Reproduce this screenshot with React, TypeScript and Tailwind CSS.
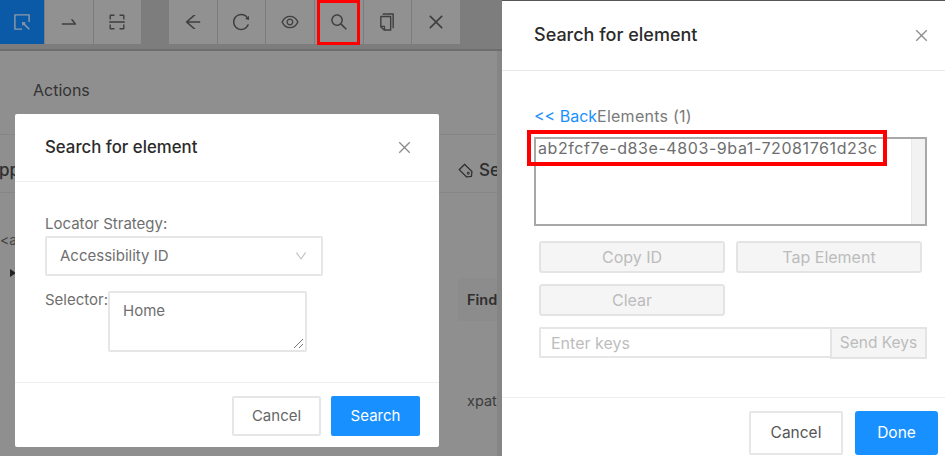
import React from 'react';
import {
  AiOutlineArrowLeft,
  AiOutlineClose,
  AiOutlineCopy,
  AiOutlineDown,
  AiOutlineEye,
  AiOutlineReload,
  AiOutlineScan,
  AiOutlineSearch,
  AiOutlineSelect,
  AiOutlineSwapRight,
  AiOutlineTag,
} from 'react-icons/ai';

const font = "font-['Inter','Liberation_Sans',sans-serif]";

const ToolButton: React.FC<{ children: React.ReactNode; active?: boolean; outlined?: boolean }> = ({ children, active, outlined }) => (
  <div
    className={`relative flex h-[44px] items-center justify-center text-[20px] ${
      active ? 'w-[44px] bg-[#0a5aa8] text-[#8f9aa6]' : 'w-[47.67px] bg-[#919191] text-[#3f3f3f]'
    }`}
  >
    {children}
    {outlined && <div className="absolute left-[2px] top-0 h-[45px] w-[43px] border-[3px] border-[#fe0000]" />}
  </div>
);

const DisabledButton: React.FC<{ label: string }> = ({ label }) => (
  <button className="h-[32px] w-[186px] rounded-[3px] border-2 border-[#e4e4e4] bg-[#f5f5f5] text-[16px] text-[#bcbcbc]">{label}</button>
);

const SearchModal = () => (
  <div className="absolute left-[15px] top-[114px] flex h-[333px] w-[424px] flex-col rounded-[2px] bg-white">
    <div className="flex h-[68px] items-center justify-between border-b border-[#eeeeee] pl-[30px] pr-[26px]">
      <span className="pt-[1px] text-[16.8px] font-medium text-[#2b2b2b]">Search for element</span>
      <AiOutlineClose className="text-[17px] text-[#8c8c8c]" />
    </div>
    <div className="flex-1 pl-[30px] pt-[33px]">
      <div className="text-[15px] leading-[18px] text-[#6f6f6f]">Locator Strategy:</div>
      <div className="mt-[3px] flex h-[40px] w-[278px] items-center justify-between rounded-[2px] border-2 border-[#e6e6e6] pl-[13px] pr-[13px] text-[15px] text-[#6f6f6f]">
        Accessibility ID
        <AiOutlineDown className="text-[14px] text-[#bfbfbf]" />
      </div>
      <div className="mt-[15px] flex items-start">
        <span className="text-[15px] leading-[18px] text-[#6f6f6f]">Selector:</span>
        <div className="relative h-[61px] w-[199px] rounded-[2px] border-2 border-[#e6e6e6] pl-[13px] pt-[9px] text-[15px] leading-[18px] text-[#6f6f6f]">
          Home
          <svg className="absolute bottom-[1px] right-[1px]" width="11" height="11" viewBox="0 0 11 11" fill="none" stroke="#777777">
            <path d="M1 10 10 1M6 10l4-4" />
          </svg>
        </div>
      </div>
    </div>
    <div className="flex h-[65px] items-start justify-end gap-[10px] border-t border-[#eeeeee] pr-[19px] pt-[13px]">
      <button className="h-[40px] w-[89px] rounded-[2px] border-2 border-[#e6e6e6] text-[15px] text-[#666666]">Cancel</button>
      <button className="h-[40px] w-[89px] rounded-[2px] bg-[#1890ff] text-[15px] text-white">Search</button>
    </div>
  </div>
);

export default function App() {
  return (
    <div className={`flex h-[456px] w-[945px] overflow-hidden bg-white ${font}`}>
      {/* dimmed inspector behind the first modal */}
      <div className="relative h-full w-[502px] shrink-0 overflow-hidden bg-[#8f8f8f] text-[#2e2e2e]">
        <div className="flex h-[51px] gap-[1px] border-b-2 border-[#6d6d6d] bg-[#7d7d7d]">
          <ToolButton active><AiOutlineSelect /></ToolButton>
          <ToolButton><AiOutlineSwapRight /></ToolButton>
          <ToolButton><AiOutlineScan /></ToolButton>
          <div className="w-[25.7px]" />
          <ToolButton><AiOutlineArrowLeft /></ToolButton>
          <ToolButton><AiOutlineReload /></ToolButton>
          <ToolButton><AiOutlineEye /></ToolButton>
          <ToolButton outlined><AiOutlineSearch /></ToolButton>
          <ToolButton><AiOutlineCopy /></ToolButton>
          <ToolButton><AiOutlineClose /></ToolButton>
        </div>
        <div className="pl-[33px] pt-[29px] text-[16px] leading-[20px] text-[#333333]">Actions</div>

        <div className="absolute left-0 right-0 top-[134px] h-[59px] border-y border-[#868686]" />
        <div className="absolute left-[-13px] top-[158px] text-[17px] font-medium">App</div>
        <div className="absolute left-0 top-[229px] text-[14px] text-[#444444]">&lt;a</div>
        <div className="absolute left-[10px] top-[269px] h-0 w-0 border-y-[4px] border-l-[6px] border-y-transparent border-l-[#222222]" />
        <div className="absolute left-[457px] top-[158px] flex items-center gap-[5px] text-[17px] font-medium">
          <AiOutlineTag className="rotate-90 text-[17px]" />
          Se
        </div>
        <div className="absolute left-[458px] top-[278px] h-[43px] w-[40px] bg-[#8c8c8c] pl-[9px] pt-[11px] text-[14.5px] font-semibold">Find</div>
        <div className="absolute left-[467px] top-[390px] text-[14.5px] text-[#3c3c3c]">xpat</div>
        <div className="absolute bottom-0 right-0 top-[51px] w-[5px] bg-[#858585]" />

        <SearchModal />
      </div>

      <div className="flex h-full min-w-0 flex-1 flex-col border-t border-[#555555]">
        <div className="flex h-[70px] shrink-0 items-center justify-between border-b border-[#e8e8e8] pl-[32px] pr-[15px]">
          <span className="pb-[2px] text-[18px] font-medium text-[#2b2b2b]">Search for element</span>
          <AiOutlineClose className="text-[17px] text-[#8c8c8c]" />
        </div>
        <div className="flex-1 pl-[32px] pr-[18px] pt-[36px]">
          <div className="text-[16px] leading-[18px] text-[#7a7a7a]">
            <span className="text-[#1890ff]">&lt;&lt; Back</span>
            <span className="tracking-[0.25px]">Elements (1)</span>
          </div>
          <div className="relative mt-[12px] flex h-[89px] justify-between border-2 border-[#a8a8a8]">
            <span className="pl-[2px] text-[16px] leading-[19px] tracking-[0.58px] text-[#6e6e6e]">ab2fcf7e-d83e-4803-9ba1-72081761d23c</span>
            <div className="w-[14px] border-l border-[#e8e8e8] bg-[#f2f2f2]" />
            <div className="absolute left-[-9px] top-[-9px] h-[36px] w-[360px] border-[4px] border-[#fe0000]" />
          </div>
          <div className="pl-[5px] pt-[15px]">
            <div className="flex gap-[11px]">
              <DisabledButton label="Copy ID" />
              <DisabledButton label="Tap Element" />
            </div>
            <div className="mt-[11px]">
              <DisabledButton label="Clear" />
            </div>
            <div className="mt-[11px] flex w-[388px]">
              <div className="flex h-[31px] w-[291px] items-center rounded-l-[2px] border-2 border-r-0 border-[#e6e6e6] pl-[10px] text-[16px] text-[#bdbdbd]">Enter keys</div>
              <button className="h-[32px] flex-1 border-2 border-[#e4e4e4] bg-[#f5f5f5] text-[15.5px] text-[#bcbcbc]">Send Keys</button>
            </div>
          </div>
        </div>
        <div className="flex h-[59px] shrink-0 items-start justify-end gap-[12px] border-t border-[#eeeeee] pr-[7px] pt-[13px]">
          <button className="h-[44px] w-[94px] rounded-[2px] border-2 border-[#e6e6e6] text-[15.5px] text-[#555555]">Cancel</button>
          <button className="h-[44px] w-[83px] rounded-[3px] bg-[#1890ff] text-[15.5px] text-white">Done</button>
        </div>
      </div>
    </div>
  );
}
